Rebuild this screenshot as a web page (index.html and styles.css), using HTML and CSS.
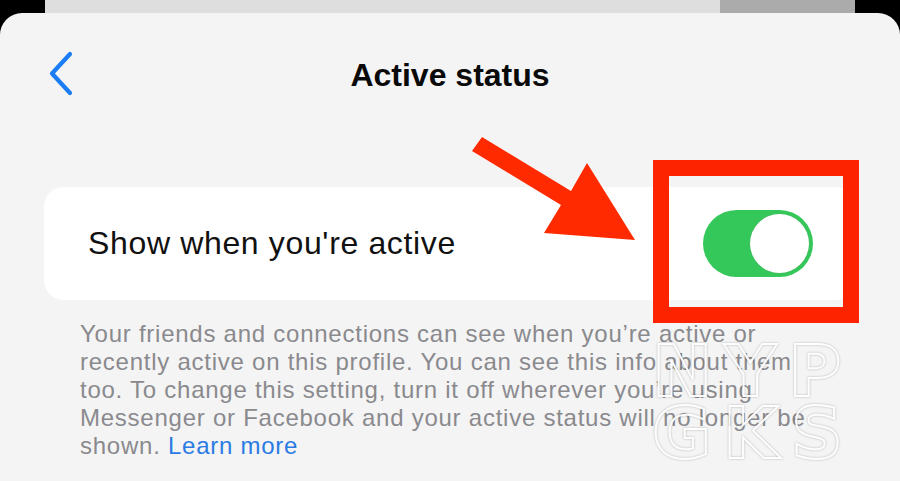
FILE: index.html
```html
<!DOCTYPE html>
<html lang="en">
<head>
<meta charset="utf-8">
<title>Active status</title>
<link rel="stylesheet" href="styles.css">
</head>
<body>
<div class="screen">
  <div class="backcard">
    <div class="back-light"></div>
    <div class="back-dark"></div>
  </div>
  <div class="sheet">
    <header class="header">
      <div class="back-btn">
        <svg width="30" height="46" viewBox="0 0 30 46">
          <polyline points="22,4 4,23.5 22,43" fill="none" stroke="#1b7cf4" stroke-width="4.2" stroke-linecap="round" stroke-linejoin="round"/>
        </svg>
      </div>
      <h1 class="title">Active status</h1>
      <div class="spacer"></div>
    </header>
    <div class="card">
      <span class="card-label">Show when you're active</span>
      <div class="toggle"><div class="knob"></div></div>
    </div>
    <p class="desc">Your friends and connections can see when you’re active or<br>recently active on this profile. You can see this info about them<br>too. To change this setting, turn it off wherever you’re using<br>Messenger or Facebook and your active status will no longer be<br>shown. <a class="link" href="#">Learn more</a></p>
  </div>
  <div class="watermark"><div>NYP</div><div>GKS</div></div>
  <div class="redbox"></div>
  <svg class="arrow" width="900" height="481" viewBox="0 0 900 481">
    <polygon points="482,137 571,191 587,163 635,240 544,233 561,205 472,151" fill="#ff2a00"/>
  </svg>
</div>
</body>
</html>
```
FILE: styles.css
```css
* { box-sizing: border-box; }
html, body { margin: 0; padding: 0; }
body {
  background: #000;
  width: 900px;
  height: 481px;
  overflow: hidden;
  font-family: "Liberation Sans", Arial, sans-serif;
}
.screen {
  position: relative;
  width: 900px;
  height: 481px;
}
.backcard {
  display: flex;
  margin: 0 45px;
  height: 13px;
}
.back-light { flex: 1; background: #dedede; }
.back-dark { width: 135px; background: #ababab; }
.sheet {
  background: #f4f4f4;
  border-radius: 22px 22px 0 0;
  height: 468px;
}
.header {
  height: 124px;
  display: grid;
  grid-template-columns: 120px 1fr 120px;
  align-items: center;
}
.back-btn {
  padding-left: 48px;
  margin-top: -5px;
  display: flex;
}
.title {
  margin: 0;
  text-align: center;
  font-size: 32px;
  font-weight: 700;
  color: #0a0a0a;
  letter-spacing: 0;
}
.card {
  margin: 50px 44px 0 44px;
  height: 113px;
  background: #fff;
  border-radius: 20px;
  display: flex;
  align-items: center;
  justify-content: space-between;
  padding: 0 43px 0 44px;
}
.card-label {
  font-size: 32px;
  color: #111;
  letter-spacing: 0.65px;
}
.toggle {
  width: 110px;
  height: 67px;
  border-radius: 34px;
  background: #34c759;
  display: flex;
  align-items: center;
  justify-content: flex-end;
  padding-right: 4px;
}
.knob {
  width: 59px;
  height: 59px;
  border-radius: 50%;
  background: #fff;
  box-shadow: 0 0 0 1px #3fbf5e;
}
.desc {
  margin: 20px 0 0 0;
  padding-left: 80px;
  font-size: 24px;
  line-height: 28px;
  color: #8a8a8e;
  letter-spacing: 0.75px;
}
.link {
  color: #2b7be4;
  text-decoration: none;
}
.redbox {
  position: absolute;
  left: 653px;
  top: 160px;
  width: 206px;
  height: 163px;
  border: 16px solid #fe2300;
}
.arrow {
  position: absolute;
  left: 0;
  top: 0;
  pointer-events: none;
}
.watermark {
  position: absolute;
  left: 652px;
  top: 340px;
  font-family: "DejaVu Sans", sans-serif;
  font-weight: 700;
  font-size: 72px;
  line-height: 62px;
  letter-spacing: 12px;
  color: transparent;
  -webkit-text-stroke: 2px rgba(255, 255, 255, 0.95);
  filter: drop-shadow(0 0 1px rgba(0, 0, 0, 0.26));
}
```
